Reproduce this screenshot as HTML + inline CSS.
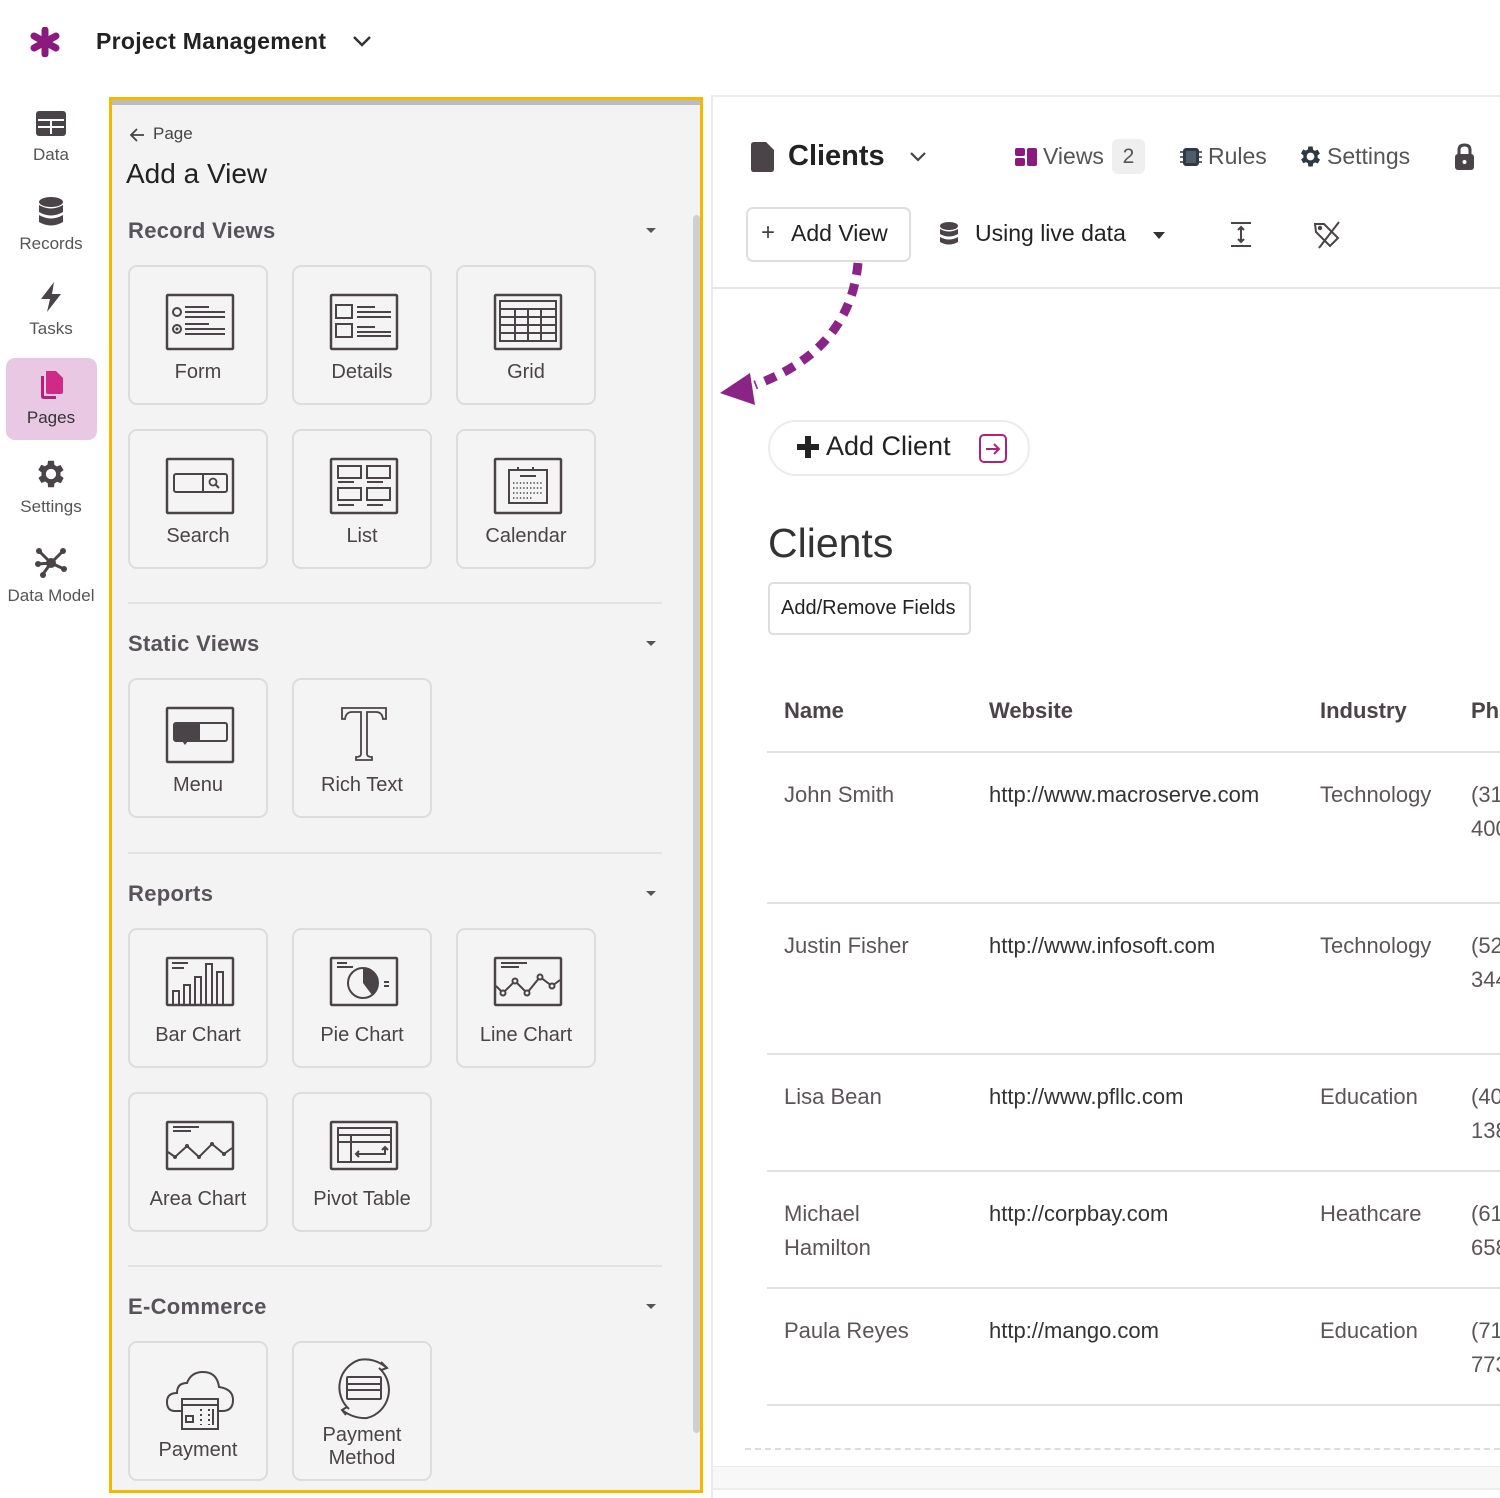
<!DOCTYPE html>
<html><head><meta charset="utf-8">
<style>
*{box-sizing:border-box;margin:0;padding:0}
body{width:1500px;height:1498px;position:relative;overflow:hidden;background:#fff;font-family:"Liberation Sans",sans-serif;color:#4a4347}
.a{position:absolute;white-space:nowrap}
.nav{position:absolute;left:0;width:102px;text-align:center;font-size:17px;color:#555}
.card{position:absolute;width:140px;height:140px;border:2px solid #dcdcdc;border-radius:9px;background:#f4f4f4}
.card svg{position:absolute;left:35px;top:26px}
.card span{position:absolute;left:0;right:0;top:92px;text-align:center;font-size:20px;color:#4a4347;line-height:26px}
.sec{position:absolute;left:128px;font-size:22px;font-weight:bold;color:#58525a;letter-spacing:.3px}
.caret{position:absolute;left:646px;width:0;height:0;border-left:5px solid transparent;border-right:5px solid transparent;border-top:5px solid #555}
.div{position:absolute;left:128px;width:534px;height:2px;background:#e3e3e3}
.td{position:absolute;font-size:22px;color:#5b5459;line-height:34px}
.tw{color:#333}
.hl{position:absolute;left:767px;right:0;height:2px;background:#e2e2e2}
</style></head><body>

<svg class="a" style="left:30px;top:27px" width="30" height="30" viewBox="0 0 30 30"><g stroke="#8b1a7f" stroke-width="7" stroke-linecap="round"><line x1="15" y1="3" x2="15" y2="27"/><line x1="4" y1="9" x2="26" y2="21"/><line x1="4" y1="21" x2="26" y2="9"/></g></svg>
<div class="a" style="left:96px;top:28px;font-size:23px;font-weight:bold;color:#222;letter-spacing:.3px">Project Management</div>
<svg class="a" style="left:352px;top:34px" width="20" height="14" viewBox="0 0 20 14"><path d="M2 3 L10 11 L18 3" fill="none" stroke="#333" stroke-width="2.5"/></svg>

<svg class="a" style="left:36px;top:111px" width="30" height="25" viewBox="0 0 30 25"><rect x="0" y="0" width="30" height="25" rx="3" fill="#4a4347"/><g stroke="#fff" stroke-width="2"><line x1="2" y1="9" x2="28" y2="9"/><line x1="2" y1="16" x2="28" y2="16"/><line x1="15" y1="9" x2="15" y2="23"/></g></svg>
<div class="nav" style="top:145px">Data</div>
<svg class="a" style="left:38px;top:197px" width="26" height="30" viewBox="0 0 26 30"><ellipse cx="13" cy="5" rx="12" ry="5" fill="#4a4347"/><path d="M1 8 Q13 15 25 8 V15 Q13 22 1 15Z" fill="#4a4347"/><path d="M1 18 Q13 25 25 18 V25 Q13 32 1 25Z" fill="#4a4347"/></svg>
<div class="nav" style="top:234px">Records</div>
<svg class="a" style="left:38px;top:282px" width="26" height="30" viewBox="0 0 26 30"><path d="M16 0 L3 17 H12 L9 30 L23 12 H14 Z" fill="#4a4347"/></svg>
<div class="nav" style="top:319px">Tasks</div>
<div class="a" style="left:6px;top:358px;width:91px;height:82px;border-radius:9px;background:#e8c8e3"></div>
<svg class="a" style="left:38px;top:370px" width="26" height="30" viewBox="0 0 26 30"><path d="M3 6 V26 Q3 29 6 29 H18 V26 H6 V6Z" fill="#b0227a"/><path d="M8 1 H18 L25 8 V22 Q25 24 23 24 H10 Q8 24 8 22Z" fill="#cf2a87"/></svg>
<div class="nav" style="top:408px;color:#333">Pages</div>
<svg class="a" style="left:37px;top:460px" width="28" height="28" viewBox="3.5 2.5 19 19"><path fill="#4a4347" d="M19.4 13a7.5 7.5 0 0 0 0-2l2.1-1.6-2-3.5-2.5 1a7 7 0 0 0-1.7-1L15 3h-4l-.4 2.7a7 7 0 0 0-1.7 1l-2.5-1-2 3.5L6.6 11a7.5 7.5 0 0 0 0 2l-2.1 1.6 2 3.5 2.5-1a7 7 0 0 0 1.7 1L11 21h4l.4-2.7a7 7 0 0 0 1.7-1l2.5 1 2-3.5z M13 15.5a3.5 3.5 0 1 1 0-7 3.5 3.5 0 0 1 0 7z"/></svg>
<div class="nav" style="top:497px">Settings</div>
<svg class="a" style="left:35px;top:547px" width="32" height="32" viewBox="0 0 32 32"><g stroke="#4a4347" stroke-width="3"><line x1="4" y1="4" x2="16" y2="16"/><line x1="28" y1="4" x2="16" y2="16"/><line x1="8" y1="27" x2="16" y2="16"/><line x1="29" y1="22" x2="16" y2="16"/><line x1="3" y1="17" x2="16" y2="16"/></g><g fill="#4a4347"><circle cx="16" cy="16" r="5"/><circle cx="4" cy="4" r="3"/><circle cx="28" cy="4" r="3"/><circle cx="8" cy="28" r="3"/><circle cx="29" cy="22" r="3"/><circle cx="3" cy="17" r="3"/></g></svg>
<div class="nav" style="top:586px">Data Model</div>

<div class="a" style="left:109px;top:97px;width:594px;height:1396px;border:3px solid #f5b800;background:#f3f3f3"></div>
<div class="a" style="left:112px;top:100px;width:588px;height:5px;background:#9a9a9a;opacity:.6"></div>
<div class="a" style="left:693px;top:215px;width:7px;height:1218px;border-radius:4px;background:#cfcfcf"></div>
<svg class="a" style="left:128px;top:127px" width="18" height="16" viewBox="0 0 18 16"><path d="M9 2 L3 8 L9 14 M3 8 H16" fill="none" stroke="#444" stroke-width="1.8"/></svg>
<div class="a" style="left:153px;top:124px;font-size:17px;color:#444">Page</div>
<div class="a" style="left:126px;top:158px;font-size:28px;color:#222">Add a View</div>

<div class="sec" style="top:218px">Record Views</div><div class="caret" style="top:228px"></div>
<div class="card" style="left:128px;top:265px"><svg width="70" height="58" viewBox="0 0 70 58"><rect x="2" y="2" width="66" height="54" rx="1" fill="none" stroke="#4a4347" stroke-width="2.5"/><circle cx="12" cy="19" r="4" fill="none" stroke="#4a4347" stroke-width="2"/><circle cx="12" cy="36" r="4" fill="none" stroke="#4a4347" stroke-width="2"/><circle cx="12" cy="36" r="1.5" fill="#4a4347"/><g stroke="#4a4347" stroke-width="2"><line x1="20" y1="14" x2="44" y2="14"/><line x1="20" y1="19" x2="60" y2="19"/><line x1="20" y1="24" x2="60" y2="24"/><line x1="20" y1="31" x2="44" y2="31"/><line x1="20" y1="36" x2="60" y2="36"/><line x1="20" y1="41" x2="60" y2="41"/></g></svg><span>Form</span></div>
<div class="card" style="left:292px;top:265px"><svg width="70" height="58" viewBox="0 0 70 58"><rect x="2" y="2" width="66" height="54" rx="1" fill="none" stroke="#4a4347" stroke-width="2.5"/><rect x="7" y="12" width="16" height="13" fill="none" stroke="#4a4347" stroke-width="2"/><rect x="7" y="31" width="16" height="13" fill="none" stroke="#4a4347" stroke-width="2"/><g stroke="#4a4347" stroke-width="2"><line x1="28" y1="14" x2="46" y2="14"/><line x1="28" y1="19" x2="62" y2="19"/><line x1="28" y1="24" x2="62" y2="24"/><line x1="28" y1="34" x2="46" y2="34"/><line x1="28" y1="39" x2="62" y2="39"/><line x1="28" y1="43" x2="62" y2="43"/></g></svg><span>Details</span></div>
<div class="card" style="left:456px;top:265px"><svg width="70" height="58" viewBox="0 0 70 58"><rect x="2" y="2" width="66" height="54" rx="1" fill="none" stroke="#4a4347" stroke-width="2.5"/><rect x="7" y="8" width="56" height="40" fill="none" stroke="#4a4347" stroke-width="2"/><g stroke="#4a4347" stroke-width="2"><line x1="7" y1="16" x2="63" y2="16"/><line x1="7" y1="24" x2="63" y2="24"/><line x1="7" y1="32" x2="63" y2="32"/><line x1="7" y1="40" x2="63" y2="40"/><line x1="22" y1="16" x2="22" y2="48"/><line x1="35" y1="16" x2="35" y2="48"/><line x1="48" y1="16" x2="48" y2="48"/></g></svg><span>Grid</span></div>
<div class="card" style="left:128px;top:429px"><svg width="70" height="58" viewBox="0 0 70 58"><rect x="2" y="2" width="66" height="54" rx="1" fill="none" stroke="#4a4347" stroke-width="2.5"/><rect x="9" y="17" width="53" height="18" rx="2" fill="none" stroke="#4a4347" stroke-width="2"/><line x1="38" y1="17" x2="38" y2="35" stroke="#4a4347" stroke-width="2"/><circle cx="48" cy="25" r="3.5" fill="none" stroke="#4a4347" stroke-width="1.8"/><line x1="50.5" y1="27.5" x2="54" y2="31" stroke="#4a4347" stroke-width="2"/></svg><span>Search</span></div>
<div class="card" style="left:292px;top:429px"><svg width="70" height="58" viewBox="0 0 70 58"><rect x="2" y="2" width="66" height="54" rx="1" fill="none" stroke="#4a4347" stroke-width="2.5"/><g fill="none" stroke="#4a4347" stroke-width="2"><rect x="9" y="9" width="23" height="12"/><rect x="38" y="9" width="23" height="12"/><rect x="9" y="31" width="23" height="12"/><rect x="38" y="31" width="23" height="12"/><line x1="9" y1="25" x2="25" y2="25"/><line x1="38" y1="25" x2="54" y2="25"/><line x1="9" y1="48" x2="25" y2="48"/><line x1="38" y1="48" x2="54" y2="48"/></g></svg><span>List</span></div>
<div class="card" style="left:456px;top:429px"><svg width="70" height="58" viewBox="0 0 70 58"><rect x="2" y="2" width="66" height="54" rx="1" fill="none" stroke="#4a4347" stroke-width="2.5"/><rect x="16" y="13" width="38" height="33" fill="none" stroke="#4a4347" stroke-width="2"/><g stroke="#4a4347" stroke-width="2"><line x1="27" y1="19" x2="43" y2="19"/><line x1="40" y1="10" x2="40" y2="14"/><line x1="25" y1="10" x2="25" y2="14"/></g><g stroke="#4a4347" stroke-width="1.4" stroke-dasharray="1.4 2"><line x1="20" y1="26" x2="50" y2="26"/><line x1="20" y1="31" x2="50" y2="31"/><line x1="20" y1="36" x2="50" y2="36"/><line x1="20" y1="41" x2="40" y2="41"/></g></svg><span>Calendar</span></div>
<div class="div" style="top:602px"></div>

<div class="sec" style="top:631px">Static Views</div><div class="caret" style="top:641px"></div>
<div class="card" style="left:128px;top:678px"><svg width="70" height="58" viewBox="0 0 70 58"><rect x="2" y="2" width="66" height="54" rx="1" fill="none" stroke="#4a4347" stroke-width="2.5"/><rect x="9" y="17" width="53" height="18" rx="2" fill="none" stroke="#4a4347" stroke-width="2"/><path d="M9 17 H35 V35 H23 L20 39 L17 35 H9Z" fill="#4a4347"/></svg><span>Menu</span></div>
<div class="card" style="left:292px;top:678px"><svg width="70" height="58" viewBox="0 0 70 58"><path d="M13 2 H57 V13 H54 Q53 6 47 6 H38 V48 Q38 51 43 51 V54 H27 V51 Q32 51 32 48 V6 H23 Q17 6 16 13 H13Z" fill="none" stroke="#4a4347" stroke-width="1.8"/></svg><span>Rich Text</span></div>
<div class="div" style="top:852px"></div>

<div class="sec" style="top:881px">Reports</div><div class="caret" style="top:891px"></div>
<div class="card" style="left:128px;top:928px"><svg width="70" height="58" viewBox="0 0 70 58"><rect x="2" y="2" width="66" height="47" rx="1" fill="none" stroke="#4a4347" stroke-width="2.5"/><g fill="none" stroke="#4a4347" stroke-width="2"><line x1="7" y1="7" x2="23" y2="7"/><line x1="7" y1="12" x2="19" y2="12"/><rect x="8" y="35" width="6" height="14"/><rect x="19" y="29" width="6" height="20"/><rect x="30" y="21" width="6" height="28"/><rect x="41" y="8" width="6" height="41"/><rect x="52" y="16" width="6" height="33"/></g></svg><span>Bar Chart</span></div>
<div class="card" style="left:292px;top:928px"><svg width="70" height="58" viewBox="0 0 70 58"><rect x="2" y="2" width="66" height="47" rx="1" fill="none" stroke="#4a4347" stroke-width="2.5"/><g stroke="#4a4347" stroke-width="2" fill="none"><line x1="8" y1="7" x2="18" y2="7"/><line x1="8" y1="11" x2="24" y2="11"/><circle cx="34" cy="27" r="15"/><line x1="55" y1="26" x2="60" y2="26"/><line x1="55" y1="30" x2="60" y2="30"/></g><path d="M34 12 A15 15 0 0 1 49 27 A15 15 0 0 1 43 39 L34 27Z" fill="#4a4347"/></svg><span>Pie Chart</span></div>
<div class="card" style="left:456px;top:928px"><svg width="70" height="58" viewBox="0 0 70 58"><rect x="2" y="2" width="66" height="47" rx="1" fill="none" stroke="#4a4347" stroke-width="2.5"/><g stroke="#4a4347" stroke-width="2" fill="none"><line x1="8" y1="7" x2="34" y2="7"/><line x1="8" y1="11" x2="26" y2="11"/><path d="M3 30 L10 37 L22 25 L34 37 L47 21 L59 30 L67 24"/><circle cx="10" cy="37" r="2.5" fill="#f4f4f4"/><circle cx="22" cy="25" r="2.5" fill="#f4f4f4"/><circle cx="34" cy="37" r="2.5" fill="#f4f4f4"/><circle cx="47" cy="21" r="2.5" fill="#f4f4f4"/><circle cx="59" cy="30" r="2.5" fill="#f4f4f4"/></g></svg><span>Line Chart</span></div>
<div class="card" style="left:128px;top:1092px"><svg width="70" height="58" viewBox="0 0 70 58"><rect x="2" y="2" width="66" height="47" rx="1" fill="none" stroke="#4a4347" stroke-width="2.5"/><g stroke="#4a4347" stroke-width="2" fill="none"><line x1="8" y1="7" x2="34" y2="7"/><line x1="8" y1="11" x2="26" y2="11"/><path d="M3 32 L10 37 L22 26 L34 37 L47 24 L59 34 L67 28"/></g><g fill="#4a4347"><circle cx="10" cy="37" r="2"/><circle cx="22" cy="26" r="2"/><circle cx="34" cy="37" r="2"/><circle cx="47" cy="24" r="2"/><circle cx="59" cy="34" r="2"/></g></svg><span>Area Chart</span></div>
<div class="card" style="left:292px;top:1092px"><svg width="70" height="58" viewBox="0 0 70 58"><rect x="2" y="2" width="66" height="47" rx="1" fill="none" stroke="#4a4347" stroke-width="2.5"/><g stroke="#4a4347" stroke-width="2" fill="none"><rect x="9" y="8" width="53" height="34"/><line x1="9" y1="15" x2="62" y2="15"/><line x1="9" y1="22" x2="62" y2="22"/><line x1="22" y1="15" x2="22" y2="42"/><path d="M27 34 H56 V27 M53 30 L56 27 L59 30 M30 31 L27 34 L30 37"/></g></svg><span>Pivot Table</span></div>
<div class="div" style="top:1265px"></div>

<div class="sec" style="top:1294px">E-Commerce</div><div class="caret" style="top:1304px"></div>
<div class="card" style="left:128px;top:1341px"><svg width="70" height="70" viewBox="0 0 70 70" style="top:24px"><g stroke="#4a4347" stroke-width="2" fill="none"><path d="M17 44 H10 Q2 44 2 35 Q2 26 12 26 Q12 16 22 16 Q26 5 38 5 Q52 5 54 20 Q68 22 68 33 Q68 44 57 44 H53"/><rect x="17" y="32" width="36" height="30"/><line x1="17" y1="38" x2="53" y2="38"/><rect x="21" y="49" width="7" height="6"/><line x1="36" y1="42" x2="36" y2="58" stroke-dasharray="2 3"/><line x1="44" y1="42" x2="44" y2="58" stroke-dasharray="2 3"/><line x1="48" y1="42" x2="48" y2="58"/></g></svg><span style="top:94px">Payment</span></div>
<div class="card" style="left:292px;top:1341px"><svg width="70" height="70" viewBox="0 0 70 70" style="top:11px"><g stroke="#4a4347" stroke-width="2" fill="none"><path d="M20 55 A29 29 0 0 1 30 6 Q45 3 58 14"/><path d="M52 8 L58 14 L52 16"/><path d="M50 14 A29 29 0 0 1 38 64 Q25 65 13 56"/><path d="M18 53 L13 56 L17 61"/><rect x="18" y="23" width="34" height="22" rx="1"/><line x1="18" y1="30" x2="52" y2="30"/><line x1="18" y1="36" x2="52" y2="36"/></g></svg><span style="top:81px;line-height:23px;white-space:normal">Payment<br>Method</span></div>

<div class="a" style="left:711px;top:95px;width:2px;height:1403px;background:#ebebeb"></div>
<div class="a" style="left:711px;top:95px;width:789px;height:2px;background:#ececec"></div>
<svg class="a" style="left:751px;top:142px" width="24" height="30" viewBox="0 0 24 30"><path d="M3 0 H15 L23 8 V27 Q23 30 20 30 H3 Q0 30 0 27 V3 Q0 0 3 0Z" fill="#4a4347"/></svg>
<div class="a" style="left:788px;top:140px;font-size:29px;font-weight:bold;color:#222">Clients</div>
<svg class="a" style="left:908px;top:150px" width="20" height="13" viewBox="0 0 20 13"><path d="M3 3 L10 10 L17 3" fill="none" stroke="#444" stroke-width="2.2"/></svg>
<svg class="a" style="left:1015px;top:148px" width="24" height="18" viewBox="0 0 24 18"><g fill="#8b1a7f"><rect x="0" y="0" width="10" height="8" rx="2"/><rect x="0" y="10" width="10" height="8" rx="2"/><rect x="12" y="0" width="10" height="18" rx="2"/></g></svg>
<div class="a" style="left:1043px;top:143px;font-size:23px;color:#555">Views</div>
<div class="a" style="left:1112px;top:139px;width:33px;height:35px;border-radius:6px;background:#efefef;font-size:21px;color:#555;text-align:center;line-height:35px">2</div>
<svg class="a" style="left:1180px;top:145px" width="22" height="24" viewBox="0 0 22 24"><rect x="3" y="3" width="16" height="18" rx="3" fill="#2e3944"/><rect x="6" y="6" width="10" height="12" fill="#4f5d6b"/><g stroke="#2e3944" stroke-width="1.5"><line x1="0" y1="7" x2="3" y2="7"/><line x1="0" y1="12" x2="3" y2="12"/><line x1="0" y1="17" x2="3" y2="17"/><line x1="19" y1="7" x2="22" y2="7"/><line x1="19" y1="12" x2="22" y2="12"/><line x1="19" y1="17" x2="22" y2="17"/></g></svg>
<div class="a" style="left:1208px;top:143px;font-size:23px;color:#555">Rules</div>
<svg class="a" style="left:1300px;top:146px" width="21" height="21" viewBox="3.5 2.5 19 19"><path fill="#2e3944" d="M19.4 13a7.5 7.5 0 0 0 0-2l2.1-1.6-2-3.5-2.5 1a7 7 0 0 0-1.7-1L15 3h-4l-.4 2.7a7 7 0 0 0-1.7 1l-2.5-1-2 3.5L6.6 11a7.5 7.5 0 0 0 0 2l-2.1 1.6 2 3.5 2.5-1a7 7 0 0 0 1.7 1L11 21h4l.4-2.7a7 7 0 0 0 1.7-1l2.5 1 2-3.5z M13 15.5a3.5 3.5 0 1 1 0-7 3.5 3.5 0 0 1 0 7z"/></svg>
<div class="a" style="left:1327px;top:143px;font-size:23px;color:#555">Settings</div>
<svg class="a" style="left:1454px;top:143px" width="21" height="27" viewBox="0 0 21 27"><path d="M5 11 V7 Q5 2 10.5 2 Q16 2 16 7 V11" fill="none" stroke="#4a4347" stroke-width="3"/><rect x="1" y="11" width="19" height="16" rx="3" fill="#4a4347"/><circle cx="10.5" cy="19" r="2" fill="#fff"/></svg>

<div class="a" style="left:746px;top:207px;width:165px;height:55px;border:2px solid #dedede;border-radius:7px;background:#fff"></div>
<div class="a" style="left:761px;top:219px;font-size:24px;color:#444">+</div>
<div class="a" style="left:791px;top:220px;font-size:23px;color:#222">Add View</div>
<svg class="a" style="left:939px;top:222px" width="20" height="24" viewBox="0 0 20 24"><ellipse cx="10" cy="4" rx="9" ry="4" fill="#4a4347"/><path d="M1 7 Q10 12 19 7 V12 Q10 17 1 12Z" fill="#4a4347"/><path d="M1 15 Q10 20 19 15 V20 Q10 25 1 20Z" fill="#4a4347"/></svg>
<div class="a" style="left:975px;top:220px;font-size:23px;color:#222">Using live data</div>
<div class="a" style="left:1153px;top:232px;width:0;height:0;border-left:6px solid transparent;border-right:6px solid transparent;border-top:7px solid #333"></div>
<svg class="a" style="left:1230px;top:221px" width="22" height="27" viewBox="0 0 22 27"><g stroke="#4a4347" stroke-width="2" fill="none"><line x1="1" y1="2" x2="21" y2="2"/><line x1="1" y1="25" x2="21" y2="25"/><line x1="11" y1="6" x2="11" y2="21"/><path d="M8 9 L11 6 L14 9 M8 18 L11 21 L14 18"/></g></svg>
<svg class="a" style="left:1312px;top:220px" width="30" height="29" viewBox="0 0 30 29"><g stroke="#4a4347" stroke-width="2" fill="none"><path d="M3 4 H12 L26 18 L18 26 L4 12Z"/><line x1="27" y1="2" x2="7" y2="28"/><circle cx="8" cy="8" r="1.2" fill="#4a4347"/></g></svg>
<div class="a" style="left:712px;top:287px;width:788px;height:2px;background:#e6e6e6"></div>

<svg class="a" style="left:710px;top:255px" width="170" height="160" viewBox="0 0 170 160"><path d="M148 8 Q140 95 45 130" fill="none" stroke="#8b2487" stroke-width="9" stroke-dasharray="12 9"/><path d="M10 138 L40 118 L45 150Z" fill="#8b2487"/></svg>

<div class="a" style="left:768px;top:420px;width:262px;height:56px;border:2px solid #ececec;border-radius:28px;background:#fff"></div>
<svg class="a" style="left:797px;top:436px" width="22" height="22" viewBox="0 0 22 22"><path d="M8 0 H14 V8 H22 V14 H14 V22 H8 V14 H0 V8 H8Z" fill="#222"/></svg>
<div class="a" style="left:826px;top:431px;font-size:27px;color:#222">Add Client</div>
<svg class="a" style="left:978px;top:433px" width="30" height="31" viewBox="0 0 30 31"><rect x="2" y="2" width="26" height="27" rx="4" fill="none" stroke="#b0227a" stroke-width="2"/><path d="M8 16 H21 M16 11 L21 16 L16 21" fill="none" stroke="#b0227a" stroke-width="2"/></svg>

<div class="a" style="left:768px;top:520px;font-size:41px;color:#333">Clients</div>
<div class="a" style="left:768px;top:582px;width:203px;height:53px;border:2px solid #dedede;border-radius:5px;background:#fff"></div>
<div class="a" style="left:781px;top:597px;font-size:20px;color:#222">Add/Remove Fields</div>

<div class="td" style="left:784px;top:694px;font-weight:bold;color:#4a4347">Name</div>
<div class="td" style="left:989px;top:694px;font-weight:bold;color:#4a4347">Website</div>
<div class="td" style="left:1320px;top:694px;font-weight:bold;color:#4a4347">Industry</div>
<div class="td" style="left:1471px;top:694px;font-weight:bold;color:#4a4347">Ph</div>
<div class="hl" style="top:751px"></div>

<div class="td" style="left:784px;top:778px">John Smith</div><div class="td tw" style="left:989px;top:778px">http://www.macroserve.com</div><div class="td" style="left:1320px;top:778px">Technology</div><div class="td" style="left:1471px;top:778px">(31<br>400</div>
<div class="hl" style="top:902px"></div>
<div class="td" style="left:784px;top:929px">Justin Fisher</div><div class="td tw" style="left:989px;top:929px">http://www.infosoft.com</div><div class="td" style="left:1320px;top:929px">Technology</div><div class="td" style="left:1471px;top:929px">(52<br>344</div>
<div class="hl" style="top:1053px"></div>
<div class="td" style="left:784px;top:1080px">Lisa Bean</div><div class="td tw" style="left:989px;top:1080px">http://www.pfllc.com</div><div class="td" style="left:1320px;top:1080px">Education</div><div class="td" style="left:1471px;top:1080px">(40<br>138</div>
<div class="hl" style="top:1170px"></div>
<div class="td" style="left:784px;top:1197px">Michael<br>Hamilton</div><div class="td tw" style="left:989px;top:1197px">http://corpbay.com</div><div class="td" style="left:1320px;top:1197px">Heathcare</div><div class="td" style="left:1471px;top:1197px">(61<br>658</div>
<div class="hl" style="top:1287px"></div>
<div class="td" style="left:784px;top:1314px">Paula Reyes</div><div class="td tw" style="left:989px;top:1314px">http://mango.com</div><div class="td" style="left:1320px;top:1314px">Education</div><div class="td" style="left:1471px;top:1314px">(71<br>773</div>
<div class="hl" style="top:1404px"></div>
<div class="a" style="left:745px;top:1448px;width:755px;border-top:2px dashed #dcdcdc"></div>
<div class="a" style="left:713px;top:1466px;width:787px;height:24px;background:#f8f8f8;border-top:1px solid #ececec;border-bottom:2px solid #eeeeee"></div>
</body></html>
